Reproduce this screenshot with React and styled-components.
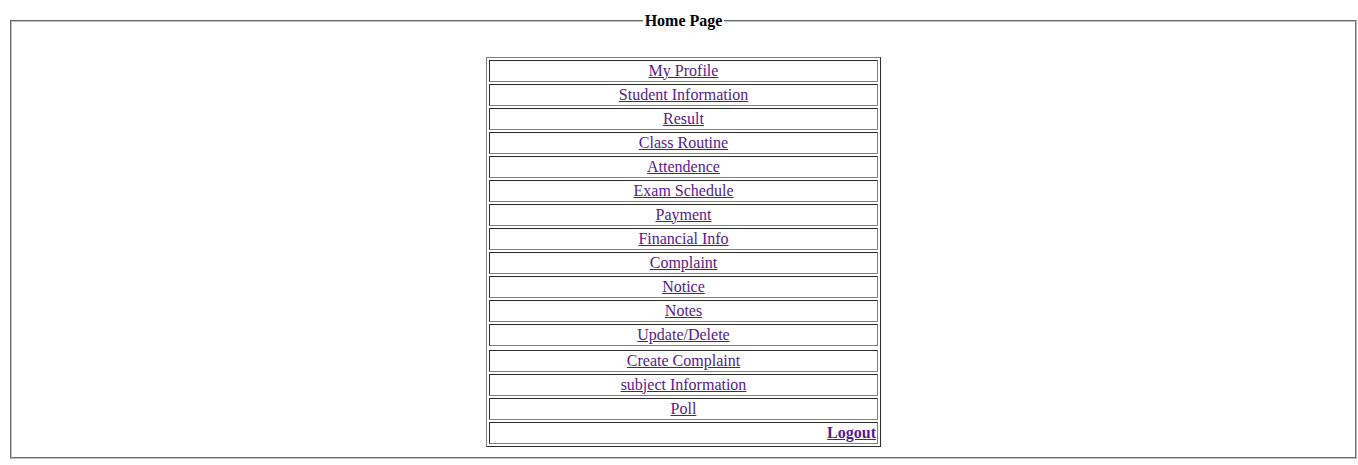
import React from "react";
import styled, { createGlobalStyle } from "styled-components";

const Global = createGlobalStyle`
  html, body { margin: 0; padding: 0; background: #fff; }
  body {
    padding: 12px 0 0 8px;
    font-family: "Liberation Serif", "Times New Roman", serif;
    font-size: 16px;
    color: #000;
  }
`;

const Frame = styled.fieldset`
  margin: 0 1px 0 2px;
  padding: 0.35em 0.75em 0.625em;
  border: 2px groove rgb(192, 192, 192);
`;

const Title = styled.legend`
  margin: 0 auto;
  padding: 0 2px;
  font-weight: bold;
  font-size: 16px;
`;

const Spacer = styled.div`
  height: 21px;
`;

const Menu = styled.table`
  width: 395px;
  margin: 0 auto;
  border-collapse: separate;
  border-spacing: 2px;
  border: 1px outset grey;
`;

const Cell = styled.td`
  padding: 1px;
  border: 1px inset grey;
  text-align: ${(p) => (p.$right ? "right" : "center")};
  font-weight: ${(p) => (p.$bold ? "bold" : "normal")};
  line-height: 18px;
`;

const GapRow = styled.tr``;

const Link = styled.a`
  color: #551a8b;
  text-decoration: underline;
`;

const items = [
  "My Profile",
  "Student Information",
  "Result",
  "Class Routine",
  "Attendence",
  "Exam Schedule",
  "Payment",
  "Financial Info",
  "Complaint",
  "Notice",
  "Notes",
  "Update/Delete",
  null,
  "Create Complaint",
  "subject Information",
  "Poll",
];

export default function App() {
  return (
    <>
      <Global />
      <Frame>
        <Title>Home Page</Title>
        <Spacer />
        <Menu>
          <tbody>
            {items.map((t, i) =>
              t === null ? (
                <GapRow key={i} />
              ) : (
                <tr key={i}>
                  <Cell>
                    <Link href="#">{t}</Link>
                  </Cell>
                </tr>
              )
            )}
            <tr>
              <Cell $right $bold>
                <Link href="#">Logout</Link>
              </Cell>
            </tr>
          </tbody>
        </Menu>
      </Frame>
    </>
  );
}
